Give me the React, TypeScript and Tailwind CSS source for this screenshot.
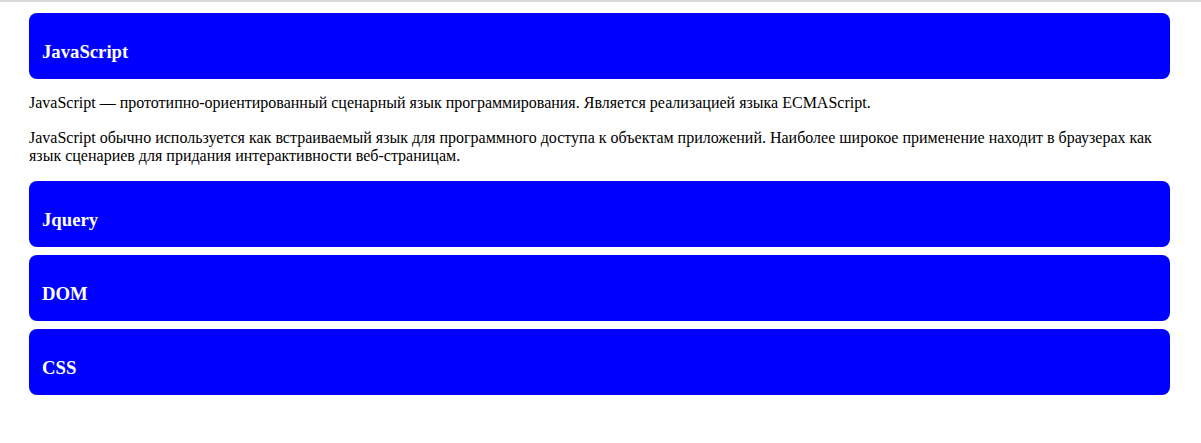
import React from 'react';

const sections = ['Jquery', 'DOM', 'CSS'];

const Header: React.FC<{ title: string }> = ({ title }) => (
  <div className="bg-[#0000ff] rounded-lg pt-[27.5px] pb-[16.2px] px-[13px] mb-[8.3px]">
    <h3 className="text-white font-bold text-[18.72px] leading-[22px]">{title}</h3>
  </div>
);

const App: React.FC = () => {
  return (
    <div
      className="min-h-screen bg-white border-t-2 border-[#dadada] text-black"
      style={{ fontFamily: '"Liberation Serif", "Times New Roman", serif' }}
    >
      <div className="ml-[29px] mr-[31px] pt-[11px]">
        <div className="bg-[#0000ff] rounded-lg pt-[27.5px] pb-[16.2px] px-[13px]">
          <h3 className="text-white font-bold text-[18.72px] leading-[22px]">JavaScript</h3>
        </div>
        <div className="text-base leading-[18.4px] pt-[15.6px] pb-[15.6px] space-y-4">
          <p>
            JavaScript — прототипно-ориентированный сценарный язык программирования. Является реализацией языка ECMAScript.
          </p>
          <p>
            JavaScript обычно используется как встраиваемый язык для программного доступа к объектам приложений. Наиболее широкое применение находит в браузерах как язык сценариев для придания интерактивности веб-страницам.
          </p>
        </div>
        {sections.map((s) => (
          <Header key={s} title={s} />
        ))}
      </div>
    </div>
  );
};

export default App;
